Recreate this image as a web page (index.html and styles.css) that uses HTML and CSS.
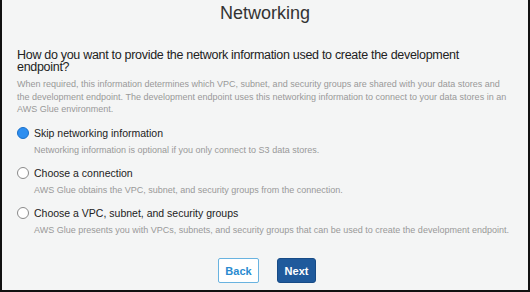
FILE: index.html
```html
<!DOCTYPE html>
<html lang="en">
<head>
<meta charset="UTF-8" />
<meta name="viewport" content="width=device-width, initial-scale=1" />
<title>Networking - AWS Glue</title>
<link rel="stylesheet" href="styles.css">
</head>
<body>
<div class="frame">
  <h1 class="title">Networking</h1>

  <div class="panel">
    <h2 class="question">How do you want to provide the network information used to create the development endpoint?</h2>
    <p class="help">When required, this information determines which VPC, subnet, and security groups are shared with your data stores and the development endpoint. The development endpoint uses this networking information to connect to your data stores in an AWS Glue environment.</p>

    <div class="options">
      <label class="option">
        <span class="radio checked"></span>
        <span class="option-text">
          <span class="option-label">Skip networking information</span>
          <span class="option-desc">Networking information is optional if you only connect to S3 data stores.</span>
        </span>
      </label>
      <label class="option">
        <span class="radio"></span>
        <span class="option-text">
          <span class="option-label">Choose a connection</span>
          <span class="option-desc">AWS Glue obtains the VPC, subnet, and security groups from the connection.</span>
        </span>
      </label>
      <label class="option">
        <span class="radio"></span>
        <span class="option-text">
          <span class="option-label">Choose a VPC, subnet, and security groups</span>
          <span class="option-desc">AWS Glue presents you with VPCs, subnets, and security groups that can be used to create the development endpoint.</span>
        </span>
      </label>
    </div>
  </div>

  <div class="actions">
    <button class="btn btn-back" type="button">Back</button>
    <button class="btn btn-next" type="button">Next</button>
  </div>
</div>
</body>
</html>
```

FILE: styles.css
```css
html, body {
  margin: 0;
  padding: 0;
}
body {
  font-family: 'Liberation Sans', Arial, Helvetica, sans-serif;
  background: #f4f5f5;
  color: #222;
}
.frame {
  box-sizing: border-box;
  width: 530px;
  height: 292px;
  border-left: 2px solid #111;
  border-right: 2px solid #111;
  border-bottom: 2px solid #111;
  background: #f4f5f5;
  display: flex;
  flex-direction: column;
}
.title {
  margin: 0;
  padding-top: 2px;
  text-align: center;
  font-size: 18px;
  font-weight: normal;
  line-height: 22px;
  color: #333;
}
.panel {
  padding: 25px 17px 0 15px;
}
.question {
  margin: 0;
  font-size: 12.5px;
  font-weight: normal;
  line-height: 12px;
  letter-spacing: -0.3px;
  color: #222;
}
.help {
  margin: 5px 0 0;
  font-size: 9px;
  line-height: 12.6px;
  color: #999;
}
.options {
  display: flex;
  flex-direction: column;
  gap: 9.5px;
  margin-top: 10px;
}
.option {
  display: flex;
  align-items: flex-start;
  gap: 5px;
}
.radio {
  box-sizing: border-box;
  width: 12px;
  height: 12px;
  margin-top: 1.5px;
  flex-shrink: 0;
  border-radius: 50%;
  border: 1px solid #8a8a8a;
  background: #fff;
}
.radio.checked {
  border-color: #1a6fc9;
  background: #2d8ef0;
}
.option-text {
  display: flex;
  flex-direction: column;
  gap: 4.5px;
}
.option-label {
  font-size: 10.5px;
  line-height: 14px;
  color: #222;
}
.option-desc {
  font-size: 9px;
  line-height: 12px;
  color: #999;
}
.actions {
  display: flex;
  justify-content: center;
  gap: 18px;
  margin-top: auto;
  padding: 0 0 7px 4px;
}
.btn {
  box-sizing: border-box;
  height: 25px;
  padding: 0;
  font-family: inherit;
  font-size: 11px;
  font-weight: bold;
  border-radius: 2px;
  cursor: pointer;
}
.btn-back {
  width: 41px;
  background: #fff;
  color: #2a8bd0;
  border: 1px solid #69b3e0;
}
.btn-next {
  width: 39px;
  background: #1f5a9c;
  color: #fff;
  border: 1px solid #174b86;
  border-radius: 3px;
}
```
